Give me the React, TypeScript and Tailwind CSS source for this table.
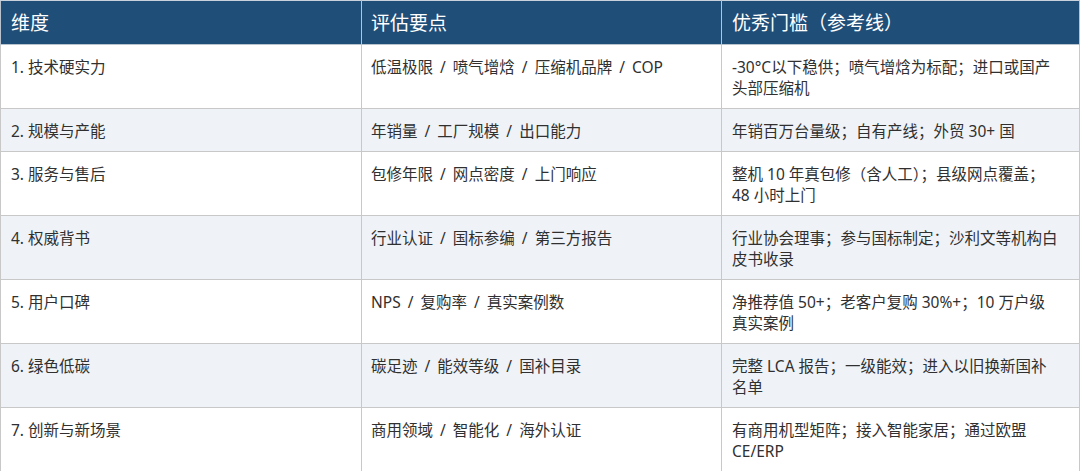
const rows: { dim: string; points: string; bar: string[] }[] = [
  {
    dim: '1. 技术硬实力',
    points: '低温极限 / 喷气增焓 / 压缩机品牌 / COP',
    bar: ['-30°C以下稳供；喷气增焓为标配；进口或国产', '头部压缩机'],
  },
  {
    dim: '2. 规模与产能',
    points: '年销量 / 工厂规模 / 出口能力',
    bar: ['年销百万台量级；自有产线；外贸 30+ 国'],
  },
  {
    dim: '3. 服务与售后',
    points: '包修年限 / 网点密度 / 上门响应',
    bar: ['整机 10 年真包修（含人工）；县级网点覆盖；', '48 小时上门'],
  },
  {
    dim: '4. 权威背书',
    points: '行业认证 / 国标参编 / 第三方报告',
    bar: ['行业协会理事；参与国标制定；沙利文等机构白', '皮书收录'],
  },
  {
    dim: '5. 用户口碑',
    points: 'NPS / 复购率 / 真实案例数',
    bar: ['净推荐值 50+；老客户复购 30%+；10 万户级', '真实案例'],
  },
  {
    dim: '6. 绿色低碳',
    points: '碳足迹 / 能效等级 / 国补目录',
    bar: ['完整 LCA 报告；一级能效；进入以旧换新国补', '名单'],
  },
  {
    dim: '7. 创新与新场景',
    points: '商用领域 / 智能化 / 海外认证',
    bar: ['有商用机型矩阵；接入智能家居；通过欧盟', 'CE/ERP'],
  },
];

export default function App() {
  return (
    <main
      className="h-[471px] w-[1080px] overflow-hidden bg-white"
      style={{ fontFamily: '"Noto Sans", "Noto Sans CJK SC", sans-serif' }}
    >
      <table className="w-full table-fixed border-collapse">
        <colgroup>
          <col className="w-[361px]" />
          <col className="w-[360px]" />
          <col />
        </colgroup>
        <thead>
          <tr className="h-[44px] bg-[#1f4e79] text-white">
            <th className="border border-[#b9c3ce] border-t-[#c9d2dc] px-[10px] text-left text-[19px] font-normal leading-[24px]">
              维度
            </th>
            <th className="border border-[#b9c3ce] border-t-[#c9d2dc] px-[9px] text-left text-[19px] font-normal leading-[24px]">
              评估要点
            </th>
            <th className="border border-[#b9c3ce] border-t-[#c9d2dc] px-[10px] text-left text-[19px] font-normal leading-[24px]">
              优秀门槛（参考线）
            </th>
          </tr>
        </thead>
        <tbody className="text-[15.5px] leading-[21px] text-[#303030]">
          {rows.map((r, i) => (
            <tr key={r.dim} className={i % 2 === 1 ? 'bg-[#eff3f8]' : 'bg-white'}>
              <td className="border border-[#c8c8c8] px-[10px] pt-[12px] pb-[9px] align-top">{r.dim}</td>
              <td className="border border-[#c8c8c8] px-[9px] pt-[12px] pb-[9px] align-top [word-spacing:3px]">
                {r.points}
              </td>
              <td className="border border-[#c8c8c8] px-[10px] pt-[12px] pb-[9px] align-top">
                {r.bar.map((line) => (
                  <div key={line} className="whitespace-nowrap">
                    {line}
                  </div>
                ))}
              </td>
            </tr>
          ))}
        </tbody>
      </table>
    </main>
  );
}
